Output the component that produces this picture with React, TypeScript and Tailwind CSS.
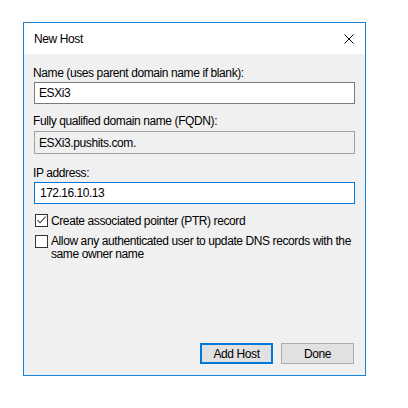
import React from "react";

const font = { fontFamily: '"Liberation Sans", Arial, sans-serif' };

const App = () => {
  return (
    <div className="w-[408px] h-[408px] bg-white pt-[22px] pl-[23px]" style={font}>
      <div className="w-[343px] h-[354px] border border-[#1883d7] bg-[#f0f0f0] flex flex-col text-[12px] tracking-[-0.4px] text-black">
        <div className="h-[31px] bg-white flex items-center justify-between pl-[10px] pr-[11px] shrink-0">
          <span>New Host</span>
          <svg width="10" height="10" viewBox="0 0 10 10">
            <path d="M0.5 0.5 L9.5 9.5 M9.5 0.5 L0.5 9.5" stroke="#000" strokeWidth="1" />
          </svg>
        </div>
        <div className="flex flex-col pl-[10px] pr-[10px] pt-[11px] flex-1">
          <label className="leading-[16px] h-[16px] -ml-[1px]">Name (uses parent domain name if blank):</label>
          <div className="mt-[1px] h-[22px] bg-white border border-[#7a7a7a] flex items-center pl-[4px] leading-none">
            ESXi3
          </div>
          <label className="leading-[16px] h-[16px] mt-[9px] -ml-[1px]">Fully qualified domain name (FQDN):</label>
          <div className="mt-[2px] h-[23px] bg-[#f0f0f0] border border-[#a0a0a0] flex items-center pl-[4px] leading-none">
            ESXi3.pushits.com.
          </div>
          <label className="leading-[16px] h-[16px] mt-[11px] -ml-[1px]">IP address:</label>
          <div className="mt-[1px] h-[22px] bg-white border border-[#0078d7] flex items-center pl-[5px] leading-none tracking-[-0.5px]">
            172.16.10.13
          </div>
          <div className="flex items-center mt-[10px] h-[13px] ml-[1px]">
            <span className="w-[13px] h-[13px] border border-[#333] bg-white flex items-center justify-center shrink-0">
              <svg width="11" height="11" viewBox="0 0 11 11">
                <path d="M1.5 5 L4 7.8 L9.8 1.5" stroke="#333" strokeWidth="1.1" fill="none" />
              </svg>
            </span>
            <span className="ml-[3px] leading-[14px] whitespace-nowrap">Create associated pointer (PTR) record</span>
          </div>
          <div className="flex items-start mt-[8px] ml-[1px]">
            <span className="w-[13px] h-[13px] border border-[#333] bg-white shrink-0" />
            <span className="ml-[3px] leading-[13px] whitespace-nowrap">
              Allow any authenticated user to update DNS records with the
              <br />
              same owner name
            </span>
          </div>
          <div className="flex-1" />
          <div className="flex justify-end gap-[8px] mb-[11px] mr-[1px]">
            <button className="w-[73px] h-[21px] bg-[#e1e1e1] border-2 border-[#0078d7] leading-none">
              Add Host
            </button>
            <button className="w-[73px] h-[21px] bg-[#e1e1e1] border border-[#adadad] leading-none">
              Done
            </button>
          </div>
        </div>
      </div>
    </div>
  );
};

export default App;
